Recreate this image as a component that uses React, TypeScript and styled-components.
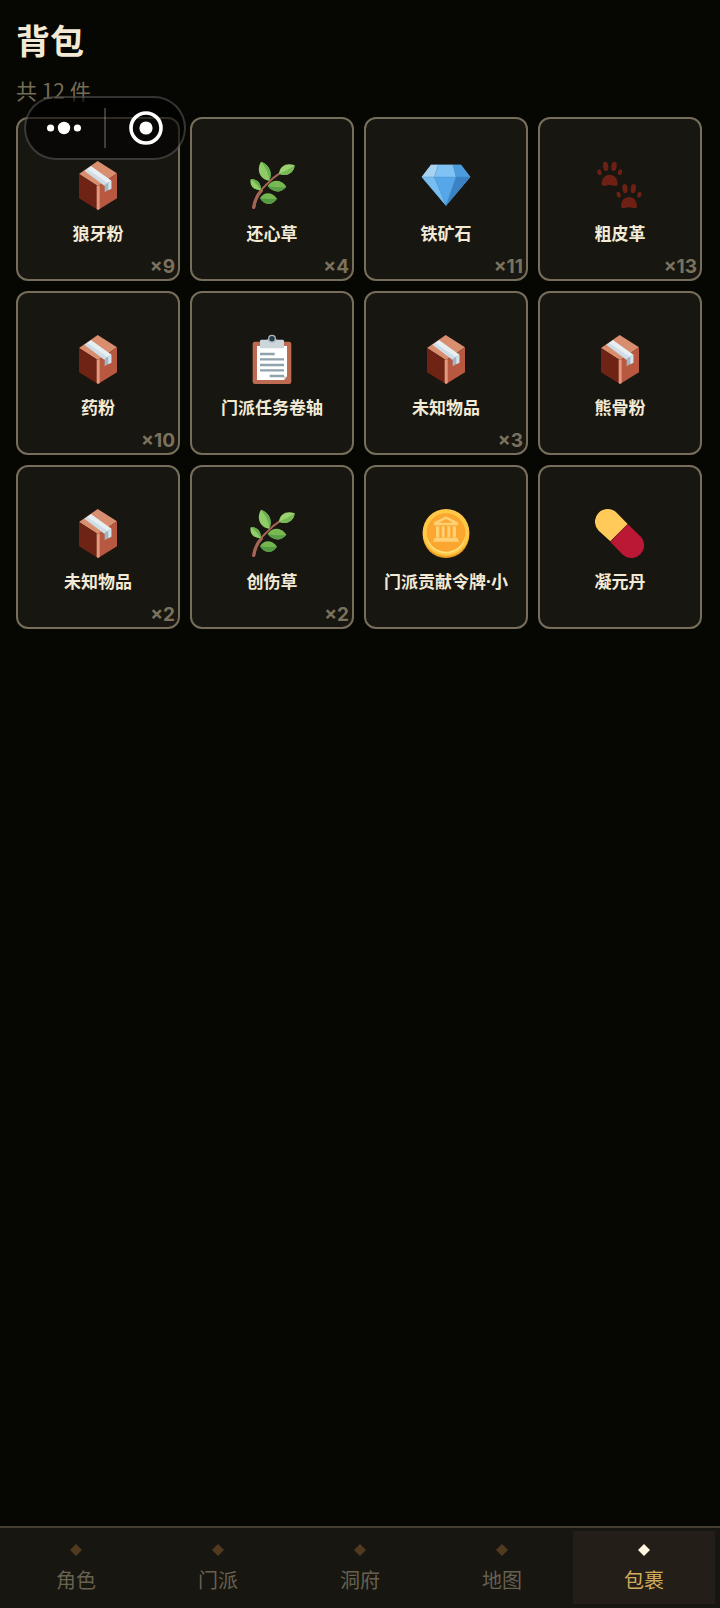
import React, { useState } from 'react';
import styled, { createGlobalStyle } from 'styled-components';

const GlobalStyle = createGlobalStyle`
  * { box-sizing: border-box; }
  body {
    margin: 0;
    background: #060702;
    color: #f3ead6;
    font-family: "Noto Sans CJK SC", "Noto Sans", sans-serif;
  }
  button { font: inherit; color: inherit; cursor: pointer; }
`;

const Page = styled.div`
  position: relative;
  display: flex;
  flex-direction: column;
  min-height: 100vh;
`;

const Main = styled.main`
  flex: 1;
  padding: 17px 18px 20px 16px;
`;

const Title = styled.h1`
  margin: 0;
  font-size: 34px;
  line-height: 46px;
  font-weight: 700;
`;

const Summary = styled.p`
  margin: 12px 0;
  font-size: 21px;
  line-height: 30px;
  color: #766d59;
`;

const Grid = styled.ul`
  display: grid;
  grid-template-columns: repeat(4, 1fr);
  gap: 10px;
  margin: 0;
  padding: 0;
  list-style: none;
`;

const Card = styled.button`
  position: relative;
  display: flex;
  flex-direction: column;
  align-items: center;
  justify-content: center;
  gap: 12px;
  width: 100%;
  aspect-ratio: 1;
  padding: 8px 0 0;
  border: 2px solid #766e5a;
  border-radius: 12px;
  background: #171610;
`;

const Icon = styled.svg`
  width: 50px;
  height: 50px;
`;

const ItemName = styled.span`
  font-family: "Noto Sans", "Noto Sans CJK SC", sans-serif;
  font-size: 17px;
  line-height: 24px;
  font-weight: 700;
  white-space: nowrap;
`;

const Count = styled.span`
  position: absolute;
  right: 3px;
  bottom: 0;
  font-family: Inter, "Noto Sans", sans-serif;
  font-size: 19px;
  line-height: 24px;
  font-weight: 700;
  color: #7b725e;
`;

const Capsule = styled.div`
  position: absolute;
  top: 96px;
  left: 24px;
  display: flex;
  align-items: center;
  width: 162px;
  height: 64px;
  border: 2px solid rgba(255, 255, 255, 0.2);
  border-radius: 32px;
  background: rgba(0, 0, 0, 0.6);
`;

const CapsuleButton = styled.button`
  display: flex;
  flex: 1;
  align-items: center;
  justify-content: center;
  height: 100%;
  padding: 0;
  border: 0;
  background: none;
`;

const Divider = styled.span`
  width: 2px;
  height: 40px;
  margin: 0 2px;
  background: rgba(255, 255, 255, 0.22);
`;

const TabBar = styled.nav`
  display: flex;
  padding: 3px 5px 4px;
  border-top: 2px solid #453d30;
  background: #171610;
`;

const Tab = styled.button<{ $active: boolean }>`
  display: flex;
  flex: 1;
  flex-direction: column;
  align-items: center;
  gap: 10px;
  padding: 13px 0 10px;
  border: 0;
  background: ${(p) => (p.$active ? '#231e17' : 'transparent')};
  color: ${(p) => (p.$active ? '#d2ac5c' : '#686150')};
  font-size: 20px;
  line-height: 28px;
`;

const Mark = styled.svg<{ $active: boolean }>`
  width: 12px;
  height: 12px;
  fill: ${(p) => (p.$active ? '#fff6e0' : '#503a20')};
`;

type Kind = 'box' | 'herb' | 'gem' | 'paws' | 'board' | 'coin' | 'pill';

const Paw = () => (
  <>
    <ellipse cx="13" cy="37" rx="6" ry="9" transform="rotate(-14 13 37)" />
    <ellipse cx="32" cy="19" rx="8" ry="14" transform="rotate(-8 32 19)" />
    <ellipse cx="57" cy="19" rx="8" ry="14" transform="rotate(8 57 19)" />
    <ellipse cx="75" cy="37" rx="6" ry="9" transform="rotate(14 75 37)" />
    <path d="M20 72C20 55 30 44 44 44S68 55 68 72C68 78 62 78 56 77Q44 73 32 77C26 78 20 78 20 72Z" />
  </>
);

const drawings: Record<Kind, React.ReactNode> = {
  box: (
    <g transform="translate(0 2)">
      <path d="M74 1 132 38 75 77 18 40Z" fill="#d98e70" />
      <path d="M18 40 75 77V148L18 113Z" fill="#6f2315" />
      <path d="M75 77 132 38V113L75 148Z" fill="#b95840" />
      <path d="M71 74 75 77 80 74V145L75 148 71 145Z" fill="#e19a7c" />
      <path d="M34 30 54 17 115 60 95 76Z" fill="#cfdee6" />
      <path d="M43 25 54 17 115 60 104 67Z" fill="#e7eff3" />
      <path d="M95 72 115 60V84L106 88 95 95Z" fill="#a2b5c2" />
      <path d="M106 66 115 60V84L106 89Z" fill="#d5e3ea" />
    </g>
  ),
  herb: (
    <>
      <path d="M21 144Q26 102 59 73Q77 53 101 38" fill="none" stroke="#a66455" strokeWidth="6" strokeLinecap="round" />
      <path d="M20 142Q25 111 43 92" fill="none" stroke="#a66455" strokeWidth="10" strokeLinecap="round" />
      <path d="M42 5C66 13 78 37 67 62C41 60 26 31 42 5Z" fill="#8fcb67" />
      <path d="M42 5C66 13 78 37 67 62Q66 34 42 5Z" fill="#6bb050" />
      <path d="M96 41C98 17 120 7 143 16C141 39 119 52 96 41Z" fill="#9bd26f" />
      <path d="M96 41Q120 33 143 16C141 39 119 52 96 41Z" fill="#76b955" />
      <path d="M11 58C31 55 44 72 41 91C22 91 7 78 11 58Z" fill="#92cf69" />
      <path d="M11 58C31 55 44 72 41 91Q31 70 11 58Z" fill="#67ad4e" />
      <path d="M62 78C75 57 103 57 118 80C102 100 79 99 62 78Z" fill="#78b952" />
      <path d="M62 78Q91 84 118 80C102 100 79 99 62 78Z" fill="#5a9f47" />
      <path d="M39 115C51 94 75 95 90 116C75 137 53 137 39 115Z" fill="#74b750" />
      <path d="M39 115Q65 119 90 116C75 137 53 137 39 115Z" fill="#559b43" />
    </>
  ),
  gem: (
    <>
      <path d="M30 14H120L148 51 75 137 2 51Z" fill="#54a5e5" />
      <path d="M30 14H52L40 51H2Z" fill="#a9d2ef" />
      <path d="M52 14H96L105 51H40Z" fill="#80c2f3" />
      <path d="M96 14H120L148 51H105Z" fill="#4b9bdd" />
      <path d="M2 51H40L75 137Z" fill="#76bdf0" />
      <path d="M40 51H105L75 137Z" fill="#55a7e9" />
      <path d="M105 51H148L75 137Z" fill="#3b82c4" />
      <path d="M52 14 40 51 75 137 105 51 96 14M2 51H148" fill="none" stroke="#4689bf" strokeWidth="1" />
    </>
  ),
  paws: (
    <g fill="#6e2015">
      <Paw />
      <g transform="translate(58 67)"><Paw /></g>
    </g>
  ),
  board: (
    <>
      <rect x="17" y="23" width="116" height="127" rx="7" fill="#bd6b52" />
      <path d="M30 36H120V127L111 138H30Z" fill="#fff" />
      <path d="M111 138 120 127H111Z" fill="#cfd8dc" />
      <path d="M39 21Q39 17 43 17H57Q63 17 64 14H86Q87 17 93 17H107Q111 17 111 21V43H39Z" fill="#cbd5da" />
      <circle cx="75" cy="14" r="10" fill="#2d3b46" stroke="#a8b9c3" strokeWidth="4" />
      <path d="M39 60H83M39 76H111M39 93H111M39 109H111M68 126H111" stroke="#8fa3ad" strokeWidth="7" />
    </>
  ),
  coin: (
    <>
      <circle cx="75" cy="80" r="70" fill="#efa022" />
      <circle cx="75" cy="73" r="70" fill="#ffc847" />
      <circle cx="75" cy="74" r="58" fill="#faa62f" />
      <path d="M18 84A58 58 0 0 0 132 84A57 52 0 0 1 18 84Z" fill="#ffe07a" />
      <g fill="#ffd071">
        <path fillRule="evenodd" d="M75 25 111 43V52H39V43ZM75 33 55 44H95Z" />
        <path d="M45 55H55V88H45ZM62 55H71V88H62ZM79 55H88V88H79ZM95 55H105V88H95ZM41 89H109L114 101H36Z" />
      </g>
    </>
  ),
  pill: (
    <>
      <path d="M46 100 11 68A38 38 0 0 1 65 14L98 48Z" fill="#ffca59" />
      <path d="M98 48 136 85A38 38 0 0 1 82 139L46 102Z" fill="#ba1835" />
    </>
  ),
};

const items: { name: string; kind: Kind; count?: number }[] = [
  { name: '狼牙粉', kind: 'box', count: 9 },
  { name: '还心草', kind: 'herb', count: 4 },
  { name: '铁矿石', kind: 'gem', count: 11 },
  { name: '粗皮革', kind: 'paws', count: 13 },
  { name: '药粉', kind: 'box', count: 10 },
  { name: '门派任务卷轴', kind: 'board' },
  { name: '未知物品', kind: 'box', count: 3 },
  { name: '熊骨粉', kind: 'box' },
  { name: '未知物品', kind: 'box', count: 2 },
  { name: '创伤草', kind: 'herb', count: 2 },
  { name: '门派贡献令牌·小', kind: 'coin' },
  { name: '凝元丹', kind: 'pill' },
];

const tabs = ['角色', '门派', '洞府', '地图', '包裹'];

export default function App() {
  const [active, setActive] = useState('包裹');
  return (
    <Page lang="zh-CN">
      <GlobalStyle />
      <Main>
        <Title>背包</Title>
        <Summary>共 {items.length} 件</Summary>
        <Grid>
          {items.map((item, i) => (
            <li key={i}>
              <Card type="button">
                <Icon viewBox="0 0 150 150" aria-hidden="true">{drawings[item.kind]}</Icon>
                <ItemName>{item.name}</ItemName>
                {item.count && <Count>×{item.count}</Count>}
              </Card>
            </li>
          ))}
        </Grid>
      </Main>
      <Capsule>
        <CapsuleButton type="button" aria-label="更多">
          <svg width="36" height="14" viewBox="0 0 36 14" fill="#fff">
            <circle cx="4.6" cy="7" r="3.6" />
            <circle cx="18" cy="7" r="6.2" />
            <circle cx="31.4" cy="7" r="3.6" />
          </svg>
        </CapsuleButton>
        <Divider />
        <CapsuleButton type="button" aria-label="关闭">
          <svg width="34" height="34" viewBox="0 0 34 34">
            <circle cx="17" cy="17" r="15" fill="none" stroke="#fff" strokeWidth="3.6" />
            <circle cx="17" cy="17" r="6.6" fill="#fff" />
          </svg>
        </CapsuleButton>
      </Capsule>
      <TabBar>
        {tabs.map((tab) => (
          <Tab key={tab} type="button" $active={tab === active} onClick={() => setActive(tab)}>
            <Mark $active={tab === active} viewBox="0 0 12 12" aria-hidden="true">
              <path d="M6 0 12 6 6 12 0 6Z" />
            </Mark>
            {tab}
          </Tab>
        ))}
      </TabBar>
    </Page>
  );
}
